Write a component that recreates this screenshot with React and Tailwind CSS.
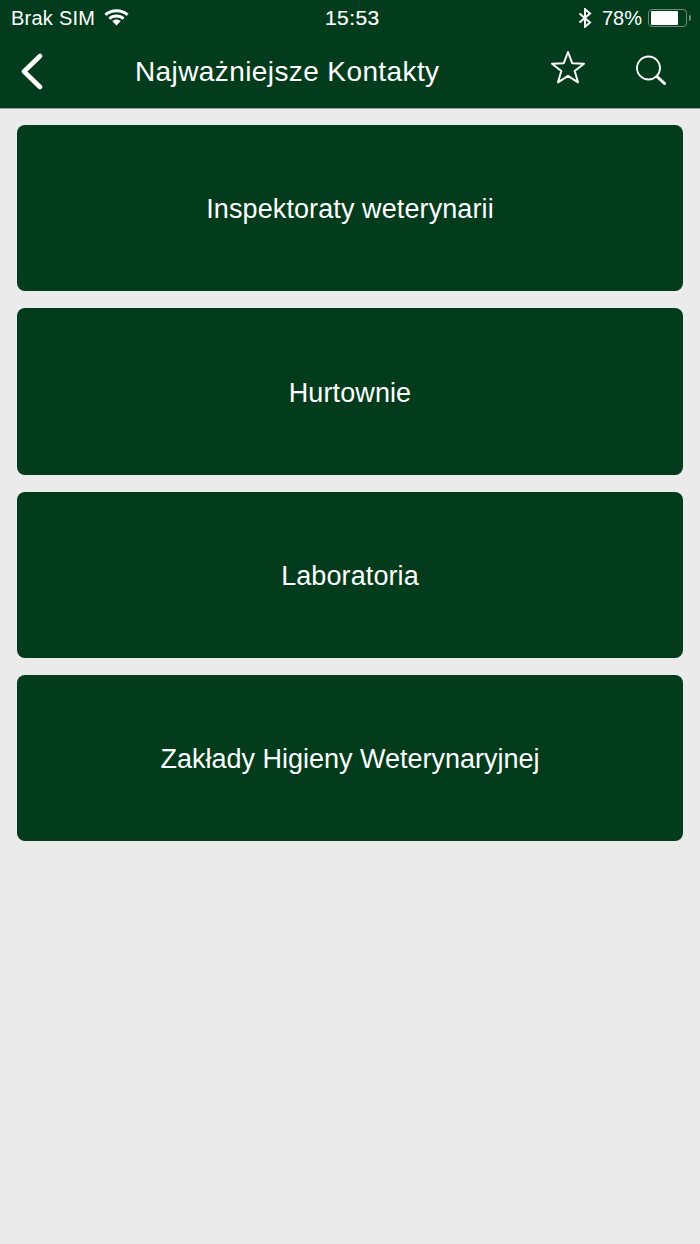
const items = [
  { t: "Inspektoraty weterynarii", c: "tracking-[0.1px]" },
  { t: "Hurtownie", c: "tracking-[0.1px]" },
  { t: "Laboratoria", c: "tracking-[0.1px]" },
  { t: "Zakłady Higieny Weterynaryjnej", c: "tracking-[0px]" },
];

function Wifi() {
  return (
    <svg width="25" height="18" viewBox="0 0 26 18" className="ml-[9px] -mt-[2px]" fill="none" stroke="white" strokeWidth="3">
      <path d="M1.500 6.800C7.500 1 18.500 1 24.500 6.800" />
      <path d="M5.600 10.800C9.600 7 16.400 7 20.400 10.800" />
      <path fill="white" stroke="none" d="M13 17.800 8.600 13.200C11.200 11 14.800 11 17.400 13.200Z" />
    </svg>
  );
}

export default function App() {
  return (
    <div className="min-h-[1244px] bg-[#ebebeb] font-['Liberation_Sans',Arial,sans-serif] text-white">
      <header className="h-[109px] bg-[#023c1c] border-b border-[#8fa898]">
        <div className="h-[36px] flex items-center justify-between pl-[11px] pr-[9px] relative text-[20px]">
          <div className="flex items-center">
            <span className="tracking-[0.25px]">Brak SIM</span>
            <Wifi />
          </div>
          <span className="absolute left-[325px] top-[6px] font-medium text-[21px] leading-[24px] tracking-[0.4px] [-webkit-text-stroke:0.2px_white]">15:53</span>
          <div className="flex items-center">
            <svg width="14" height="20" viewBox="0 0 14 20" fill="none" stroke="white" strokeWidth="2" className="mr-[10px]">
              <path d="M1.500 5.500 12 14.600 7 18.800V1.200L12 5.400 1.500 14.500" />
            </svg>
            <span>78%</span>
            <div className="ml-[6px] -mt-[1px] w-[39px] h-[18px] rounded-[4px] border-[1.5px] border-[#6d8c79] px-[1.500px] py-[1px]">
              <div className="h-full w-[27px] bg-white rounded-[1px]" />
            </div>
            <div className="ml-[2px] -mt-[1px] w-[2px] h-[6px] bg-[#6d8c79] rounded-r-sm" />
          </div>
        </div>
        <div className="h-[72px] relative flex items-center pl-[135px]">
          <svg width="24" height="38" viewBox="0 0 24 38" fill="none" stroke="white" strokeWidth="4.600" strokeLinecap="round" strokeLinejoin="round" className="absolute left-[20px] top-[17px]">
            <path d="M20 3 4 18.500 20 34" />
          </svg>
          <h1 className="text-[28px] font-normal tracking-[0.4px]">Najważniejsze Kontakty</h1>
          <svg width="36" height="34" viewBox="0 0 36 34" fill="none" stroke="white" strokeWidth="2" strokeLinejoin="round" className="absolute left-[550px] top-[14px]">
            <path d="M18 2 22.200 13.200 34 13.700 24.700 21 28 32.300 18 25.800 8 32.300 11.300 21 2 13.700 13.800 13.200Z" />
          </svg>
          <svg width="32" height="32" viewBox="0 0 32 32" fill="none" stroke="white" className="absolute left-[635px] top-[18px]">
            <circle cx="13.500" cy="14" r="11.500" strokeWidth="1.800" />
            <path d="M22 22.500 29.500 29.500" strokeWidth="3" strokeLinecap="round" />
          </svg>
        </div>
      </header>
      <main className="flex flex-col gap-[17px] px-[17px] pt-[16px]">
        {items.map(({ t, c }) => (
          <div key={t} className={"h-[166.300px] rounded-[8px] bg-[#023c1c] flex items-center justify-center text-[27px] pt-[3px] " + c}>
            {t}
          </div>
        ))}
      </main>
    </div>
  );
}
